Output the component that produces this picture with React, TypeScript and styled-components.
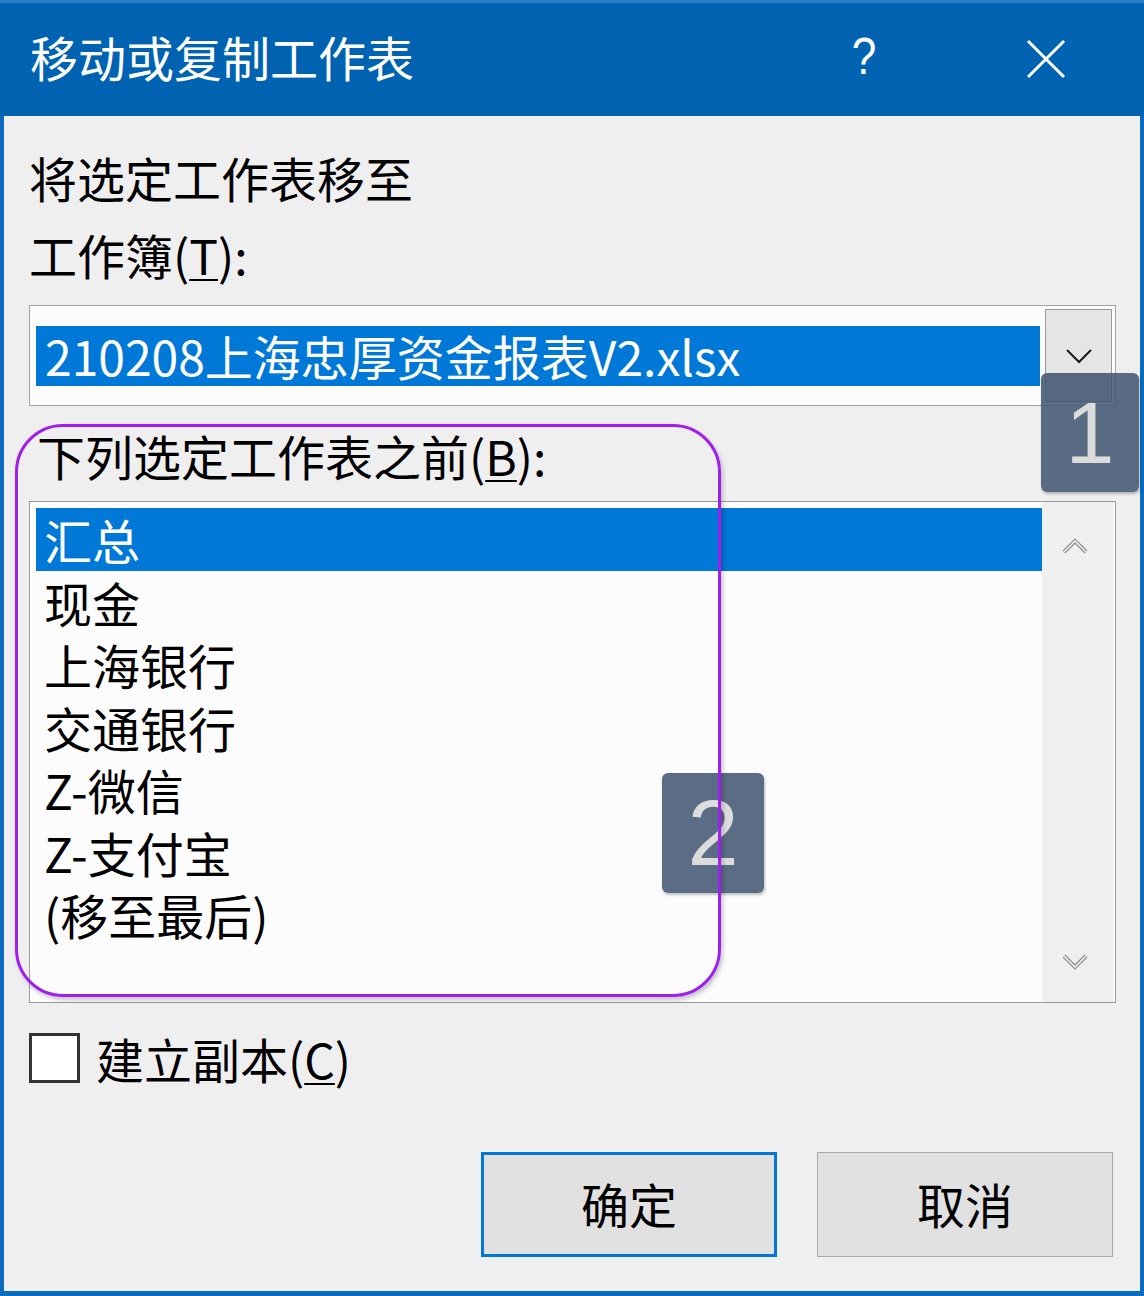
import React from "react";
import styled, { createGlobalStyle } from "styled-components";

const GlobalStyle = createGlobalStyle`
  html, body { margin: 0; padding: 0; background: #0a6ac0; }
  body { font-family: "Noto Sans CJK SC", "Noto Sans", sans-serif; }
  * { box-sizing: border-box; }
`;

const Frame = styled.div`
  width: 1144px;
  height: 1296px;
  background: #0b6bbf;
  border-top: 3px solid #2a7cc8;
  padding: 0 4px 5px 4px;
  display: flex;
  flex-direction: column;
`;

const TitleBar = styled.div`
  height: 113px;
  margin: 0 -4px;
  padding: 0 0 8px 30px;
  background: #0063b1;
  display: flex;
  align-items: center;
  color: #ffffff;
`;

const Title = styled.div`
  flex: 1;
  font-size: 48px;
  line-height: 60px;
  white-space: nowrap;
`;

const HelpGlyph = styled.div`
  width: 40px;
  font-family: "Liberation Sans", "DejaVu Sans", sans-serif;
  font-size: 52px;
  font-weight: 300;
  line-height: 60px;
  text-align: center;
  margin-right: 142px;
  transform: scaleX(0.85);
`;

const CloseBox = styled.div`
  width: 40px;
  height: 40px;
  margin-right: 78px;
  margin-top: 6px;
  display: flex;
`;

const Body = styled.div`
  flex: 1;
  position: relative;
  background: #f0eff0;
  padding: 0 27px 0 25px;
  display: flex;
  flex-direction: column;
  color: #000;
`;

const Label = styled.div<{ $top: number; $left?: number }>`
  margin-top: ${(p) => p.$top}px;
  margin-left: ${(p) => p.$left ?? 0}px;
  height: 60px;
  font-size: 48px;
  line-height: 60px;
  white-space: nowrap;
`;

const Key = styled.span`
  text-decoration: underline;
  text-decoration-thickness: 2px;
  text-underline-offset: 4px;
`;

const Dropdown = styled.div`
  margin-top: 21px;
  width: 1087px;
  height: 101px;
  background: #fdfcfd;
  border: 1px solid #a3a3a3;
  padding: 3px 3px 3px 6px;
  display: flex;
  align-items: center;
  gap: 5px;
`;

const Selected = styled.div`
  flex: 1;
  height: 60px;
  background: #0078d7;
  color: #ffffff;
  font-size: 48px;
  line-height: 58px;
  padding-left: 9px;
  white-space: nowrap;
`;

const DropButton = styled.div`
  align-self: stretch;
  width: 67px;
  background: #e5e5e5;
  border: 1px solid #9a9a9a;
  display: flex;
  align-items: center;
  justify-content: center;
`;

const ListBox = styled.div`
  margin-top: 16px;
  width: 1087px;
  height: 502px;
  background: #fdfcfd;
  border: 1px solid #9a9a9a;
  padding: 6px 2px 6px 6px;
  display: flex;
`;

const Items = styled.div`
  flex: 1;
  display: flex;
  flex-direction: column;
`;

const Row = styled.div<{ $sel?: boolean }>`
  height: 62.5px;
  line-height: 62px;
  padding-left: 8px;
  font-size: 48px;
  white-space: nowrap;
  background: ${(p) => (p.$sel ? "#0078d7" : "transparent")};
  color: ${(p) => (p.$sel ? "#ffffff" : "#000000")};
`;

const ScrollBar = styled.div`
  width: 71px;
  margin: -6px 0;
  background: #f0eff0;
  display: flex;
  flex-direction: column;
  justify-content: space-between;
  align-items: center;
  padding: 36px 6px 32px 0;
`;

const CheckRow = styled.div`
  margin-top: 30px;
  height: 50px;
  display: flex;
  align-items: center;
  gap: 16px;
`;

const CheckBox = styled.div`
  width: 51px;
  height: 50px;
  background: #ffffff;
  border: 3px solid #333333;
`;

const CheckLabel = styled.div`
  font-size: 48px;
  line-height: 60px;
  white-space: nowrap;
`;

const ButtonRow = styled.div`
  margin-top: 69px;
  display: flex;
  justify-content: flex-end;
  gap: 40px;
`;

const DialogButton = styled.div<{ $primary?: boolean }>`
  width: 296px;
  height: 105px;
  background: #e1e1e1;
  border: ${(p) => (p.$primary ? "3px solid #0078d7" : "1px solid #a9a9a9")};
  display: flex;
  align-items: center;
  justify-content: center;
  font-size: 48px;
  padding-bottom: 4px;
`;

const Badge = styled.div<{ $x: number; $y: number; $w: number; $h: number; $fs: number }>`
  position: absolute;
  left: ${(p) => p.$x}px;
  top: ${(p) => p.$y}px;
  width: ${(p) => p.$w}px;
  height: ${(p) => p.$h}px;
  border-radius: 6px;
  background: rgba(62, 84, 110, 0.85);
  box-shadow: 1px 2px 3px rgba(0, 0, 0, 0.25);
  color: #dcdcdc;
  font-family: "Liberation Sans", "DejaVu Sans", sans-serif;
  font-size: ${(p) => p.$fs}px;
  line-height: ${(p) => p.$h}px;
  text-align: center;
  z-index: 2;
`;

const Highlight = styled.div`
  position: absolute;
  left: 11px;
  top: 308px;
  width: 706px;
  height: 573px;
  border: 3px solid #a01ff0;
  border-radius: 48px;
  box-shadow: 2px 3px 4px rgba(0, 0, 0, 0.22);
  z-index: 3;
  pointer-events: none;
`;

const Chevron = ({ up }: { up?: boolean }) => (
  <svg width="26" height="16" viewBox="0 0 26 16">
    <polyline
      points={up ? "2,14 13,3 24,14" : "2,2 13,13 24,2"}
      fill="none"
      stroke="#8c8c8c"
      strokeWidth="4"
    />
    <polyline
      points={up ? "2,14 13,3 24,14" : "2,2 13,13 24,2"}
      fill="none"
      stroke="#f0eff0"
      strokeWidth="1.6"
    />
  </svg>
);

const items = ["汇总", "现金", "上海银行", "交通银行", "Z-微信", "Z-支付宝", "(移至最后)"];

export default function App() {
  return (
    <>
      <GlobalStyle />
      <Frame>
        <TitleBar>
          <Title>移动或复制工作表</Title>
          <HelpGlyph>?</HelpGlyph>
          <CloseBox>
            <svg width="40" height="40" viewBox="0 0 40 40">
              <path d="M2 2 L38 38 M38 2 L2 38" stroke="#ffffff" strokeWidth="3" fill="none" />
            </svg>
          </CloseBox>
        </TitleBar>
        <Body>
          <Label $top={31}>将选定工作表移至</Label>
          <Label $top={17}>
            工作簿(<Key>T</Key>):
          </Label>
          <Dropdown>
            <Selected>210208上海忠厚资金报表V2.xlsx</Selected>
            <DropButton>
              <svg width="28" height="16" viewBox="0 0 28 16">
                <polyline points="2,2 14,14 26,2" fill="none" stroke="#1a1a1a" strokeWidth="2" />
              </svg>
            </DropButton>
          </Dropdown>
          <Label $top={19} $left={8}>
            下列选定工作表之前(<Key>B</Key>):
          </Label>
          <ListBox>
            <Items>
              {items.map((t, i) => (
                <Row key={t} $sel={i === 0}>
                  {t}
                </Row>
              ))}
            </Items>
            <ScrollBar>
              <Chevron up />
              <Chevron />
            </ScrollBar>
          </ListBox>
          <CheckRow>
            <CheckBox />
            <CheckLabel>
              建立副本(<Key>C</Key>)
            </CheckLabel>
          </CheckRow>
          <ButtonRow>
            <DialogButton $primary>确定</DialogButton>
            <DialogButton>取消</DialogButton>
          </ButtonRow>
          <Badge $x={1037} $y={257} $w={98} $h={119} $fs={88}>
            1
          </Badge>
          <Badge $x={658} $y={657} $w={102} $h={120} $fs={92}>
            2
          </Badge>
          <Highlight />
        </Body>
      </Frame>
    </>
  );
}
